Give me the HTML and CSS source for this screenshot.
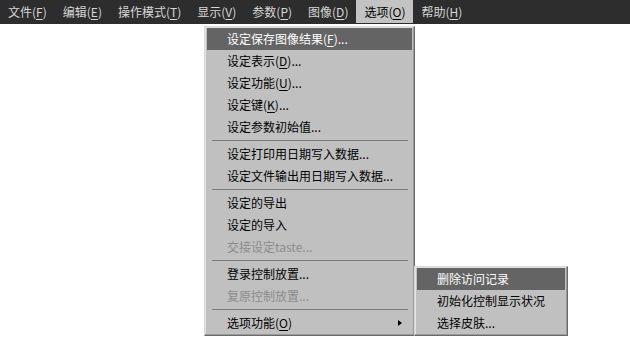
FILE: index.html
```html
<!DOCTYPE html>
<html lang="zh-CN">
<head>
<meta charset="utf-8">
<title>选项</title>
<link rel="stylesheet" href="styles.css">
</head>
<body>
<nav class="menubar">
  <div class="top-item">文件(<u>F</u>)</div>
  <div class="top-item">编辑(<u>E</u>)</div>
  <div class="top-item">操作模式(<u>T</u>)</div>
  <div class="top-item">显示(<u>V</u>)</div>
  <div class="top-item">参数(<u>P</u>)</div>
  <div class="top-item">图像(<u>D</u>)</div>
  <div class="top-item active">选项(<u>O</u>)</div>
  <div class="top-item">帮助(<u>H</u>)</div>
</nav>

<div class="menu main-menu">
  <div class="item hover">设定保存图像结果(<u>F</u>)...</div>
  <div class="item">设定表示(<u>D</u>)...</div>
  <div class="item">设定功能(<u>U</u>)...</div>
  <div class="item">设定键(<u>K</u>)...</div>
  <div class="item">设定参数初始值...</div>
  <div class="sep"></div>
  <div class="item">设定打印用日期写入数据...</div>
  <div class="item">设定文件输出用日期写入数据...</div>
  <div class="sep"></div>
  <div class="item">设定的导出</div>
  <div class="item">设定的导入</div>
  <div class="item disabled">交接设定taste...</div>
  <div class="sep"></div>
  <div class="item">登录控制放置...</div>
  <div class="item disabled">复原控制放置...</div>
  <div class="sep"></div>
  <div class="item sub">选项功能(<u>O</u>)<span class="arrow"></span></div>
</div>

<div class="menu sub-menu">
  <div class="item hover">删除访问记录</div>
  <div class="item">初始化控制显示状况</div>
  <div class="item">选择皮肤...</div>
</div>
</body>
</html>
```
FILE: styles.css
```css
html, body {
  margin: 0;
  padding: 0;
  background: #ffffff;
  font-family: "Noto Sans CJK SC", "Noto Sans", sans-serif;
  font-size: 12px;
}

.menubar {
  display: flex;
  height: 24px;
  background: #2d2d2d;
  padding-left: 0;
}

.top-item {
  padding: 0 8px;
  line-height: 23px;
  height: 23px;
  color: #d6d6d6;
  white-space: nowrap;
}

.top-item u {
  text-underline-offset: 2px;
}

.top-item.active {
  background: #c3c3c3;
  color: #000000;
}

.menu {
  position: absolute;
  background: #c0c0c0;
  border: 1px solid;
  border-color: #d8d8d8 #6a6a6a #6a6a6a #d8d8d8;
  box-shadow: inset -1px -1px 0 #9a9a9a, inset 1px 1px 0 #e2e2e2;
  padding: 1px 2px 1px 2px;
  box-sizing: border-box;
}

.main-menu {
  left: 204px;
  top: 26px;
  width: 211px;
}

.sub-menu {
  left: 414px;
  top: 266px;
  width: 154px;
}

.item {
  height: 22px;
  line-height: 22px;
  padding-left: 20px;
  color: #000000;
  white-space: nowrap;
  position: relative;
}

.item u {
  text-underline-offset: 2px;
}

.item.hover {
  background: #646464;
  color: #ffffff;
}

.item.disabled {
  color: #8c8c8c;
}

.sep {
  height: 5px;
  display: flex;
  align-items: center;
  padding: 0 4px 0 5px;
}

.sep::before {
  content: "";
  flex: 1;
  height: 1px;
  background: #7c7c7c;
}

.arrow {
  position: absolute;
  right: 10px;
  top: 8px;
  width: 0;
  height: 0;
  border-top: 3.5px solid transparent;
  border-bottom: 3.5px solid transparent;
  border-left: 4px solid #000000;
}
```
